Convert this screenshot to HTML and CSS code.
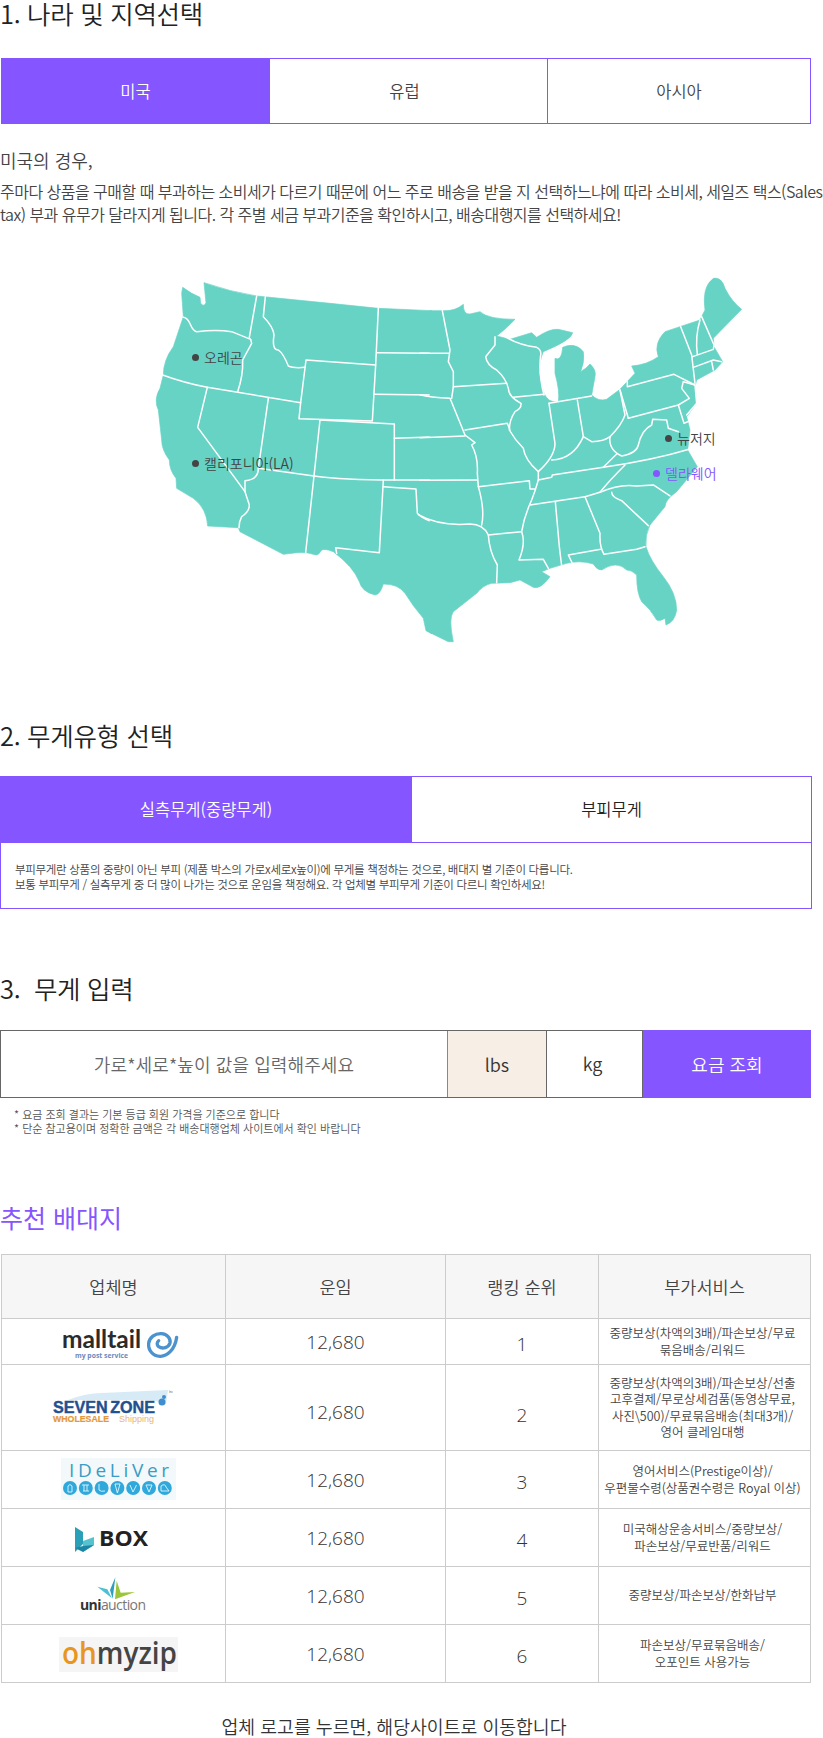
FILE: index.html
```html
<!DOCTYPE html>
<html lang="ko">
<head>
<meta charset="utf-8">
<title>배송대행 요금 조회</title>
<link rel="stylesheet" href="styles.css">
</head>
<body>

<h2 class="step-title step-first">1. 나라 및 지역선택</h2>
<div class="tabs tabs-region">
	<div class="tab tab-on tab-a">미국</div>
	<div class="tab tab-b">유럽</div>
	<div class="tab tab-c">아시아</div>
</div>
<p class="lead">미국의 경우,</p>
<p class="desc">주마다 상품을 구매할 때 부과하는 소비세가 다르기 때문에 어느 주로 배송을 받을 지 선택하느냐에 따라 소비세, 세일즈 택스(Sales tax) 부과 유무가 달라지게 됩니다. 각 주별 세금 부과기준을 확인하시고, 배송대행지를 선택하세요!</p>

<div class="map">
	<svg class="map-svg" width="823" height="400" viewBox="0 250 823 400">
		<g transform="translate(130 260) scale(.33333)">
			<path class="land" d="M158,82 Q185,102 210,112 L212,130 Q222,142 228,128 L222,68 Q300,95 380,108 L600,130 L745,145 L905,152 L905,1121 L888,1112 L880,1075 Q850,1040 825,1000 Q805,972 760,972 Q750,1005 735,1005 Q695,995 688,965 Q670,920 610,875 Q585,865 575,870 Q565,888 555,884 Q530,875 500,878 L460,883 L330,815 L325,803 L233,798 Q230,745 190,715 L140,685 L138,655 Q118,630 118,600 Q95,570 95,540 L85,450 Q70,420 90,385 L100,345 Q100,300 130,260 L160,170 L155,100 Z"/>
			<g class="lines">
				<path d="M160,172 C185,175 178,212 200,215 Q260,208 305,215 L362,238"/>
				<path d="M380,108 L358,232"/>
				<path d="M406,110 L400,170 Q430,200 432,225 Q425,270 445,270 Q460,280 475,318 Q490,325 525,322"/>
				<path d="M362,238 L365,250 L338,300 Q340,345 323,395"/>
				<path d="M98,345 Q160,368 232,382 L323,397 L512,428"/>
				<path d="M232,382 L203,502 L345,695"/>
				<path d="M415,415 L385,625 Q385,660 345,662 L345,695 L358,735 Q358,755 335,770 Q327,785 327,803"/>
				<path d="M385,625 L552,648 Q640,660 793,660 L905,660"/>
				<path d="M528,300 L737,315 L727,483 L507,476 L512,428 Z"/>
				<path d="M745,145 L737,315"/>
				<path d="M740,278 L905,280"/>
				<path d="M733,403 L905,405"/>
				<path d="M570,480 L793,492 L793,660"/>
				<path d="M793,535 L905,531"/>
				<path d="M570,480 L552,648 L527,878"/>
				<path d="M760,660 L748,878 L617,863 L620,880"/>
				<path d="M760,680 L858,687 L862,760 Q875,775 905,785"/>
			</g>
		</g>
		<g transform="translate(420 260) scale(.33333)">
			<path class="land" d="M30,152 L65,152 Q105,155 130,133 Q130,165 150,162 L180,155 Q205,178 285,178 Q260,205 230,228 L270,238 L335,218 L350,232 Q390,205 415,208 L458,218 Q455,240 370,275 Q358,300 358,340 Q365,380 372,400 Q385,430 415,425 Q420,395 405,340 L405,295 Q425,305 428,262 Q465,245 490,275 Q495,305 482,335 Q500,325 510,312 Q530,330 525,350 L515,405 Q535,425 560,418 L600,388 L645,340 L635,318 Q680,315 715,290 Q700,250 735,215 L780,200 L840,180 L855,150 Q845,80 880,55 Q905,50 915,85 Q935,125 965,148 L880,235 L882,260 L908,305 L885,330 L830,360 L825,380 L830,430 L800,470 L810,510 L803,570 L832,620 L770,695 Q735,720 735,740 L690,795 Q675,825 678,860 Q690,900 730,950 Q770,1000 770,1050 Q765,1085 738,1095 L735,1075 Q720,1085 710,1080 Q690,1045 665,1025 Q650,1000 650,945 Q635,930 620,930 Q590,900 545,930 Q530,930 520,912 Q480,900 440,910 L390,925 L365,935 L390,950 Q360,990 340,982 L300,960 L270,968 L215,970 Q190,975 170,1000 L100,1055 Q85,1075 100,1145 L85,1145 L30,1118 Z"/>
			<g class="lines">
				<path d="M-5,764 Q60,800 150,792 Q190,792 205,825 Q208,875 232,915 L230,968"/>
				<path d="M0,661 L172,660"/>
				<path d="M0,533 L135,528"/>
				<path d="M0,404 Q30,412 90,415 L135,525 L165,548 L155,555 Q175,590 172,640 L175,680 Q195,750 185,795"/>
				<path d="M67,152 L90,270 L85,305 L100,335 L100,380 L95,415"/>
				<path d="M0,280 L88,280"/>
				<path d="M100,380 L260,370"/>
				<path d="M225,230 L225,255 L197,290 Q200,315 230,330 Q258,355 265,385 Q265,410 303,430 Q305,445 285,455 Q268,480 268,510 Q285,540 310,565 Q315,600 355,635 L355,660 Q345,695 335,720 Q312,770 305,815 Q318,850 297,900 L370,898 L385,925"/>
				<path d="M255,230 Q295,255 350,262 Q365,270 362,285 Q355,340 372,405"/>
				<path d="M280,412 L372,403"/>
				<path d="M135,510 L262,490 L270,510"/>
				<path d="M387,430 L405,550 Q405,590 355,635"/>
				<path d="M387,430 L515,408"/>
				<path d="M472,420 L490,530"/>
				<path d="M600,390 L615,465 Q605,495 570,530"/>
				<path d="M395,600 Q460,598 490,530 L515,545 Q550,545 570,530 Q565,570 605,588 Q650,580 655,555 Q665,510 695,495 L698,478 L740,480 L745,505 L775,515"/>
				<path d="M355,660 L395,652 L397,645 L550,622 Q700,600 810,567"/>
				<path d="M590,582 L550,622"/>
				<path d="M615,615 Q565,665 540,697"/>
				<path d="M330,735 L495,710 L540,697 Q600,670 650,678 L700,675 L750,708"/>
				<path d="M406,725 L418,860 L425,918"/>
				<path d="M495,710 L540,820 Q538,860 552,883"/>
				<path d="M458,912 L445,885 L542,868"/>
				<path d="M552,883 L650,868 L675,860"/>
				<path d="M575,697 Q575,712 605,722 L685,797"/>
				<path d="M205,825 L305,815"/>
				<path d="M175,680 L328,662 L330,687 L345,687"/>
				<path d="M622,380 L622,365 L622,380 L762,343 L825,375"/>
				<path d="M625,475 L775,435 L808,415 L785,385 L790,365"/>
				<path d="M600,390 L625,475"/>
				<path d="M790,365 L825,375 L830,430 L800,465"/>
				<path d="M775,435 L792,490 L808,483"/>
				<path d="M782,200 L815,285 L825,370"/>
				<path d="M840,180 Q825,230 832,283"/>
				<path d="M845,170 L882,255"/>
				<path d="M818,290 L880,268 L882,255"/>
				<path d="M820,322 L880,300 L905,305"/>
				<path d="M875,305 L880,330"/>
			</g>
		</g>
	</svg>
	<span class="pin pin-oregon"><i class="dot"></i>오레곤</span>
	<span class="pin pin-cal"><i class="dot"></i>캘리포니아(LA)</span>
	<span class="pin pin-nj"><i class="dot"></i>뉴저지</span>
	<span class="pin pin-de"><i class="dot"></i>델라웨어</span>
</div>

<h2 class="step-title step-second">2. 무게유형 선택</h2>
<div class="weight-box">
	<div class="tabs-weight">
		<div class="tab tab-on">실측무게(중량무게)</div>
		<div class="tab tab-plain">부피무게</div>
	</div>
	<p class="weight-note">부피무게란 상품의 중량이 아닌 부피 (제품 박스의 가로x세로x높이)에 무게를 책정하는 것으로, 배대지 별 기준이 다릅니다.<br>보통 부피무게 / 실측무게 중 더 많이 나가는 것으로 운임을 책정해요. 각 업체별 부피무게 기준이 다르니 확인하세요!</p>
</div>

<h2 class="step-title step-third">3.&nbsp; 무게 입력</h2>
<div class="input-row">
	<div class="input-cell">가로*세로*높이 값을 입력해주세요</div>
	<div class="unit unit-lbs">lbs</div>
	<div class="unit unit-kg">kg</div>
	<div class="search-btn">요금 조회</div>
</div>
<p class="notes">* 요금 조회 결과는 기본 등급 회원 가격을 기준으로 합니다<br>* 단순 참고용이며 정확한 금액은 각 배송대행업체 사이트에서 확인 바랍니다</p>

<h2 class="rec-title">추천 배대지</h2>
<table class="rec-table">
	<colgroup>
		<col class="col-name"><col class="col-price"><col class="col-rank"><col class="col-extra">
	</colgroup>
	<thead>
		<tr><th>업체명</th><th>운임</th><th>랭킹 순위</th><th>부가서비스</th></tr>
	</thead>
	<tbody>
		<tr class="row-1">
			<td class="logo-cell">
				<svg class="logo" viewBox="0 0 224 44" width="224" height="44">
					<text class="lg-malltail" x="60" y="28" textLength="79" lengthAdjust="spacingAndGlyphs">malltail</text>
					<text class="lg-mallsub" x="73" y="38" textLength="53" lengthAdjust="spacingAndGlyphs">my post service</text>
					<path class="lg-spiral" transform="translate(-2 -70) scale(.33333)" d="M530,262 C525,300 500,320 480,319 C458,318 444,300 446,280 C448,262 465,250 484,251 C502,252 513,266 510,279 C506,293 488,298 476,290 C470,285 470,277 476,272"/>
				</svg>
			</td>
			<td class="num price">12,680</td><td class="num rank">1</td>
			<td class="extra">중량보상(차액의3배)/파손보상/무료<br>묶음배송/리워드</td>
		</tr>
		<tr class="row-2">
			<td class="logo-cell">
				<svg class="logo" viewBox="0 0 224 44" width="224" height="44">
					<path class="lg-sky" d="M66,14 Q84,7 100,7 L166,4 L164,18 L150,14 L66,14 Z"/>
					<text class="lg-seven" x="51" y="27" textLength="102" lengthAdjust="spacingAndGlyphs">SEVEN ZONE</text>
					<text class="lg-whole" x="51" y="36" textLength="56" lengthAdjust="spacingAndGlyphs">WHOLESALE</text>
					<text class="lg-ship" x="117" y="36" textLength="35" lengthAdjust="spacingAndGlyphs">Shipping</text>
					<circle class="lg-drop" cx="160" cy="16" r="3.5"/>
					<circle class="lg-drop" cx="162" cy="11" r="2"/>
					<text class="lg-inc" x="167" y="7">Inc</text>
				</svg>
			</td>
			<td class="num price">12,680</td><td class="num rank">2</td>
			<td class="extra">중량보상(차액의3배)/파손보상/선출<br>고후결제/무로상세검품(동영상무료,<br>사진\500)/무료묶음배송(최대3개)/<br>영어 클레임대행</td>
		</tr>
		<tr class="row-3">
			<td class="logo-cell">
				<svg class="logo" viewBox="0 0 224 44" width="224" height="44">
					<rect class="lg-ide-bg" x="59" y="0" width="115" height="42"/>
					<text class="lg-ide" x="67" y="19" textLength="100" lengthAdjust="spacing">IDeLiVer</text>
					<g class="lg-balls">
						<circle cx="68" cy="30" r="7"/><circle cx="83.8" cy="30" r="7"/><circle cx="99.6" cy="30" r="7"/><circle cx="115.4" cy="30" r="7"/><circle cx="131.2" cy="30" r="7"/><circle cx="147" cy="30" r="7"/><circle cx="162.8" cy="30" r="7"/>
					</g>
					<g class="lg-ball-marks">
						<path d="M66,34 L66,28 Q68,25 70,28 L70,34 Z"/><path d="M80,27 L87,27 M81,33 L87,33 M82,27 L82,33 M85,27 L85,33"/><path d="M97,26 L97,32 Q99,34 103,33"/><path d="M113,26 L118,26 L115.4,35 Z"/><path d="M128,27 L131,34 L134.5,27"/><path d="M144,27 L150,27 L147,34 Z"/><path d="M159,28 Q163,25 164,29 L167,33 L159,33 Z"/>
					</g>
				</svg>
			</td>
			<td class="num price">12,680</td><td class="num rank">3</td>
			<td class="extra">영어서비스(Prestige이상)/<br>우편물수령(상품권수령은 Royal 이상)</td>
		</tr>
		<tr class="row-4">
			<td class="logo-cell">
				<svg class="logo" viewBox="0 0 224 44" width="224" height="44">
					<path class="lg-box-a" d="M73,11 L81,16 L81,28 L73,36 Z"/>
					<path class="lg-box-b" d="M81,25 L92,21 L92,29 L81,36 Z"/>
					<path class="lg-box-c" d="M73,32 L81,30 L92,29 L81,36 Z"/>
					<text class="lg-box" x="97" y="30" textLength="49" lengthAdjust="spacingAndGlyphs">BOX</text>
				</svg>
			</td>
			<td class="num price">12,680</td><td class="num rank">4</td>
			<td class="extra">미국해상운송서비스/중량보상/<br>파손보상/무료반품/리워드</td>
		</tr>
		<tr class="row-5">
			<td class="logo-cell">
				<svg class="logo" viewBox="0 0 224 44" width="224" height="44">
					<g transform="translate(-2 -84) scale(.33333)">
						<path class="lg-uni-a" d="M292,290 L322,298 L336,325 Z"/>
						<path class="lg-uni-b" d="M346,262 L330,300 L338,326 Z"/>
						<path class="lg-uni-c" d="M345,328 L350,272 L362,308 L405,306 Z"/>
					</g>
					<text class="lg-uni" x="78" y="36" textLength="66" lengthAdjust="spacing"><tspan class="lg-uni-bold">uni</tspan>auction</text>
				</svg>
			</td>
			<td class="num price">12,680</td><td class="num rank">5</td>
			<td class="extra">중량보상/파손보상/한화납부</td>
		</tr>
		<tr class="row-6">
			<td class="logo-cell">
				<svg class="logo" viewBox="0 0 224 44" width="224" height="44">
					<rect class="lg-zip-bg" x="57" y="5" width="119" height="35"/>
					<text class="lg-zip" x="60" y="32" textLength="115" lengthAdjust="spacingAndGlyphs"><tspan class="lg-zip-oh">oh</tspan>myzip</text>
				</svg>
			</td>
			<td class="num price">12,680</td><td class="num rank">6</td>
			<td class="extra">파손보상/무료묶음배송/<br>오포인트 사용가능</td>
		</tr>
	</tbody>
</table>
<p class="foot-note">업체 로고를 누르면, 해당사이트로 이동합니다</p>

</body>
</html>
```

FILE: styles.css
```css
html, body {
	margin: 0;
	padding: 0;
	background: #fff;
}
body {
	width: 823px;
	font-family: "Noto Sans CJK KR", "Noto Sans", sans-serif;
	font-weight: 350;
	color: #333;
	overflow-x: hidden;
}

.step-title {
	margin: 0;
	font-size: 25.5px;
	line-height: 26px;
	font-weight: 350;
	color: #222;
	letter-spacing: -.3px;
}
.step-first { margin-bottom: 32px; }
.step-second { margin: 56px 0 28px; }
.step-third { margin: 66px 0 29px; }

/* tabs */
.tabs {
	display: flex;
	margin-left: 1px;
	width: 810px;
	height: 66px;
	box-sizing: border-box;
	border: 1px solid #8555ff;
}
.tab {
	display: flex;
	align-items: center;
	justify-content: center;
	font-size: 16.5px;
	color: #444;
}
.tab-on {
	background: #8555ff;
	color: #fff;
}
.tab-a { width: 269px; margin: -1px 0 -1px -1px; }
.tab-b { width: 278px; padding-right: 8px; box-sizing: border-box; border-right: 1px solid #8555ff; }
.tab-c { flex: 1; }

.lead {
	margin: 24px 0 0;
	font-size: 18px;
	line-height: 24px;
	color: #444;
}
.desc {
	margin: 8px 0 0;
	font-size: 16px;
	line-height: 23px;
	color: #444;
	letter-spacing: -.52px;
}

/* map */
.map {
	position: relative;
	height: 416px;
	margin-top: 24px;
}
.map-svg {
	display: block;
}
.land {
	fill: #67d3c5;
	stroke: #67d3c5;
	stroke-width: 2;
	stroke-linejoin: round;
}
.lines path {
	fill: none;
	stroke: #fff;
	stroke-width: 4.5;
	stroke-linejoin: round;
	stroke-linecap: round;
}
.pin {
	position: absolute;
	display: flex;
	align-items: center;
	font-size: 14px;
	line-height: 20px;
	color: #444;
	white-space: nowrap;
}
.dot {
	width: 7px;
	height: 7px;
	border-radius: 50%;
	background: #444;
	margin-right: 5px;
}
.pin-oregon { left: 192px; top: 97px; }
.pin-cal { left: 192px; top: 203px; }
.pin-nj { left: 665px; top: 178px; }
.pin-de { left: 653px; top: 213px; color: #8555ff; }
.pin-de .dot { background: #8555ff; }

/* weight type */
.weight-box {
	width: 812px;
	height: 133px;
	box-sizing: border-box;
	border: 1px solid #8555ff;
}
.tabs-weight {
	display: flex;
	height: 66px;
	margin: -1px 0 0 -1px;
	border-bottom: 1px solid #8555ff;
}
.tabs-weight .tab-on { width: 412px; }
.tab-plain { flex: 1; color: #222; }
.weight-note {
	margin: 0;
	padding: 19px 14px 0;
	font-size: 11.5px;
	line-height: 15px;
	color: #444;
	letter-spacing: -.3px;
}

/* weight input */
.input-row {
	display: flex;
	width: 811px;
	height: 68px;
	box-sizing: border-box;
	border: 1px solid #666;
	font-size: 18px;
}
.input-cell {
	width: 447px;
	display: flex;
	align-items: center;
	justify-content: center;
	color: #666;
	letter-spacing: .1px;
	border-right: 1px solid #888;
	box-sizing: border-box;
}
.unit {
	display: flex;
	align-items: center;
	justify-content: center;
	box-sizing: border-box;
	color: #333;
	border-right: 1px solid #666;
}
.unit-lbs { width: 99px; background: #f7eee6; }
.unit-kg { width: 96px; padding: 0 4px 3px 0; }
.search-btn {
	flex: 1;
	display: flex;
	align-items: center;
	justify-content: center;
	margin: -1px -1px -1px 0;
	background: #8555ff;
	color: #fff;
}
.notes {
	margin: 9px 0 0;
	padding-left: 14px;
	font-size: 11px;
	line-height: 14px;
	color: #555;
}

/* recommend table */
.rec-title {
	margin: 68px 0 23px;
	font-size: 25px;
	line-height: 28px;
	font-weight: 400;
	color: #8555ff;
}
.rec-table {
	margin-left: 1px;
	width: 810px;
	table-layout: fixed;
	border-collapse: collapse;
	border: 1px solid #ccc;
	background: #fff;
}
.rec-table th, .rec-table td {
	border: 1px solid #ccc;
	padding: 0;
	text-align: center;
	vertical-align: middle;
	box-sizing: border-box;
}
.col-name { width: 224px; }
.col-price { width: 220px; }
.col-rank { width: 153px; }
.rec-table th {
	height: 64px;
	background: #f7f6f7;
	font-size: 17.5px;
	font-weight: 350;
	color: #444;
}
.num {
	font-family: "Open Sans", "Noto Sans", sans-serif;
	font-size: 19px;
	font-weight: 300;
	color: #333;
}
.rec-table .rank { padding-top: 4px; }
.rec-table .row-2 .price { padding-top: 9px; }
.rec-table .row-2 .rank { padding-top: 14px; }
.rec-table .extra {
	padding-right: 4px;
	font-size: 12.5px;
	line-height: 16.5px;
	color: #444;
}
.row-1 td { height: 46px; }
.row-2 td { height: 86px; }
.row-3 td { height: 58px; }
.row-4 td, .row-5 td, .row-6 td { height: 58px; }
.logo {
	display: block;
}

/* logo drawings */
.lg-malltail { font-family: Lato, sans-serif; font-weight: 700; font-size: 24px; fill: #2b2b2b; }
.lg-mallsub { font-family: "Open Sans", sans-serif; font-weight: 700; font-size: 7px; fill: #6d88bd; }
.lg-spiral { fill: none; stroke: #4a93cf; stroke-width: 10; stroke-linecap: round; }
.lg-sky { fill: #d6ebf6; }
.lg-seven { font-family: "Liberation Sans", sans-serif; font-weight: 700; font-size: 16px; fill: #23508f; stroke: #23508f; stroke-width: .4; word-spacing: -2px; }
.lg-whole { font-family: "Liberation Sans", sans-serif; font-weight: 700; font-size: 9px; fill: #e5983a; stroke: #e5983a; stroke-width: .2; }
.lg-ship { font-family: "Liberation Sans", sans-serif; font-size: 9px; fill: #e9b57c; }
.lg-inc { font-family: "Liberation Sans", sans-serif; font-size: 3px; fill: #555; }
.lg-drop { fill: #3f8fd0; }
.lg-ide-bg { fill: #f3f9fb; }
.lg-ide { font-family: "Open Sans", sans-serif; font-weight: 400; font-size: 19px; fill: #3b9cc4; }
.lg-balls circle { fill: #2fa8dc; }
.lg-ball-marks path { fill: none; stroke: #e6f5fb; stroke-width: .9; }
.lg-box-a { fill: #2a9fb8; }
.lg-box-b { fill: #57c2cf; }
.lg-box-c { fill: #1b86a3; }
.lg-box { font-family: "Open Sans", sans-serif; font-weight: 700; font-size: 21px; fill: #222; }
.lg-uni-a { fill: #4cc0d4; }
.lg-uni-b { fill: #2f9fc0; }
.lg-uni-c { fill: #9cc63a; }
.lg-uni { font-family: "Open Sans", sans-serif; font-weight: 400; font-size: 14px; fill: #777; }
.lg-uni-bold { font-weight: 700; fill: #333; }
.lg-zip-bg { fill: #f5f5f5; }
.lg-zip { font-family: "Open Sans", sans-serif; font-weight: 600; font-size: 30px; fill: #444; }
.lg-zip-oh { fill: #e8961e; }

.foot-note {
	margin: 32px 0 0;
	padding-right: 35px;
	text-align: center;
	font-size: 18.3px;
	line-height: 22px;
	color: #333;
}
```
